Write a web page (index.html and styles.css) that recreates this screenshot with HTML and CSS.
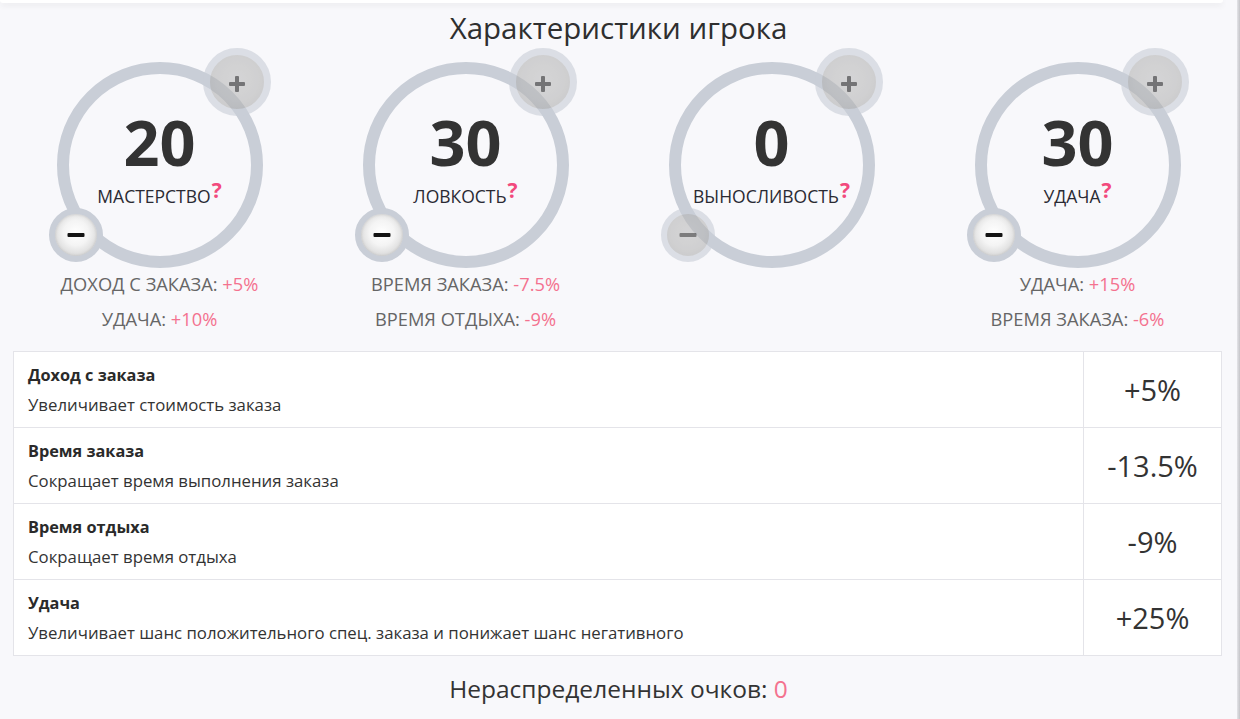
FILE: index.html
```html
<!DOCTYPE html>
<html lang="ru">
<head>
<meta charset="utf-8">
<title>Характеристики игрока</title>
<link rel="stylesheet" href="styles.css">
</head>
<body>
<div class="app">
  <main class="main">
    <div class="topbar"></div>
    <h1 class="title">Характеристики игрока</h1>

    <section class="stats">
      <div class="stat">
        <div class="dial">
          <div class="dial-value">20</div>
          <div class="dial-label">МАСТЕРСТВО<span class="hint">?</span></div>
          <button class="btn btn-plus is-disabled"><span class="sign-h"></span><span class="sign-v"></span></button>
          <button class="btn btn-minus"><span class="sign-h"></span></button>
        </div>
        <ul class="effects">
          <li>ДОХОД С ЗАКАЗА: <span class="pct">+5%</span></li>
          <li>УДАЧА: <span class="pct">+10%</span></li>
        </ul>
      </div>

      <div class="stat">
        <div class="dial">
          <div class="dial-value">30</div>
          <div class="dial-label">ЛОВКОСТЬ<span class="hint">?</span></div>
          <button class="btn btn-plus is-disabled"><span class="sign-h"></span><span class="sign-v"></span></button>
          <button class="btn btn-minus"><span class="sign-h"></span></button>
        </div>
        <ul class="effects">
          <li>ВРЕМЯ ЗАКАЗА: <span class="pct">-7.5%</span></li>
          <li>ВРЕМЯ ОТДЫХА: <span class="pct">-9%</span></li>
        </ul>
      </div>

      <div class="stat">
        <div class="dial">
          <div class="dial-value">0</div>
          <div class="dial-label">ВЫНОСЛИВОСТЬ<span class="hint">?</span></div>
          <button class="btn btn-plus is-disabled"><span class="sign-h"></span><span class="sign-v"></span></button>
          <button class="btn btn-minus is-disabled"><span class="sign-h"></span></button>
        </div>
      </div>

      <div class="stat">
        <div class="dial">
          <div class="dial-value">30</div>
          <div class="dial-label">УДАЧА<span class="hint">?</span></div>
          <button class="btn btn-plus is-disabled"><span class="sign-h"></span><span class="sign-v"></span></button>
          <button class="btn btn-minus"><span class="sign-h"></span></button>
        </div>
        <ul class="effects">
          <li>УДАЧА: <span class="pct">+15%</span></li>
          <li>ВРЕМЯ ЗАКАЗА: <span class="pct">-6%</span></li>
        </ul>
      </div>
    </section>

    <table class="summary">
      <tr>
        <td class="summary-info">
          <div class="summary-name">Доход с заказа</div>
          <div class="summary-desc">Увеличивает стоимость заказа</div>
        </td>
        <td class="summary-value">+5%</td>
      </tr>
      <tr>
        <td class="summary-info">
          <div class="summary-name">Время заказа</div>
          <div class="summary-desc">Сокращает время выполнения заказа</div>
        </td>
        <td class="summary-value">-13.5%</td>
      </tr>
      <tr>
        <td class="summary-info">
          <div class="summary-name">Время отдыха</div>
          <div class="summary-desc">Сокращает время отдыха</div>
        </td>
        <td class="summary-value">-9%</td>
      </tr>
      <tr>
        <td class="summary-info">
          <div class="summary-name">Удача</div>
          <div class="summary-desc">Увеличивает шанс положительного спец. заказа и понижает шанс негативного</div>
        </td>
        <td class="summary-value">+25%</td>
      </tr>
    </table>

    <p class="points">Нераспределенных очков: <span class="pct">0</span></p>
  </main>
  <div class="edge"></div>
</div>
</body>
</html>
```

FILE: styles.css
```css
* {
  box-sizing: border-box;
}

html,
body {
  margin: 0;
  padding: 0;
}

body {
  background: #f8f8fb;
  color: #333;
  font-family: "Open Sans", "Noto Sans", sans-serif;
  overflow: hidden;
}

.app {
  display: flex;
  height: 719px;
}

.main {
  flex: 1;
  min-width: 0;
}

.edge {
  width: 3px;
  background: linear-gradient(90deg, #e4e4e8, #c4c4c8);
}

.topbar {
  height: 3px;
  margin-right: 14px;
  background: #fff;
  border-radius: 0 0 6px 6px;
  box-shadow: 0 2px 6px rgba(0, 0, 0, 0.09);
}

.title {
  margin: 7px 0 0;
  font-size: 29.5px;
  line-height: 36px;
  font-weight: 400;
  text-align: center;
  color: #2f2f2f;
}

/* four stat dials */
.stats {
  display: grid;
  grid-template-columns: repeat(4, 1fr);
  align-items: start;
  padding: 0 6.5px;
  margin-top: 16px;
}

.stat {
  display: flex;
  flex-direction: column;
  align-items: center;
}

.dial {
  position: relative;
  width: 206px;
  height: 206px;
  border: 12px solid #c9ced7;
  border-radius: 50%;
  display: flex;
  flex-direction: column;
  align-items: center;
  padding-top: 40px;
}

.dial-value {
  font-size: 63px;
  line-height: 56px;
  font-weight: 700;
  color: #333;
}

.dial-label {
  margin-top: 12px;
  font-size: 17.5px;
  line-height: 24px;
  color: #2a2a33;
  white-space: nowrap;
}

.hint {
  display: inline-block;
  margin-left: 1px;
  font-size: 21px;
  font-weight: 700;
  color: #f24a7d;
  vertical-align: 5px;
  line-height: 16px;
}

/* plus / minus controls sit on the ring */
.btn {
  position: absolute;
  padding: 0;
  border-style: solid;
  border-color: #c9ced7;
  border-radius: 50%;
  box-sizing: content-box;
  cursor: pointer;
}

.btn-plus {
  left: 134px;
  top: -26px;
  width: 54px;
  height: 54px;
  border-width: 7px;
}

.btn-minus {
  left: -20px;
  top: 134px;
  width: 42px;
  height: 42px;
  border-width: 6px;
  background: radial-gradient(circle at 50% 45%, #ffffff 0%, #f4f4f4 40%, #c6c6c6 100%);
  box-shadow: inset 0 0 3px rgba(0, 0, 0, 0.15);
}

.btn.is-disabled {
  opacity: 0.6;
  background: radial-gradient(circle at 50% 45%, #bebebe 0%, #b6b6b6 55%, #a6a6a6 100%);
  box-shadow: none;
}

.sign-h,
.sign-v {
  position: absolute;
  left: 50%;
  top: 50%;
  background: #1e1e1e;
  border-radius: 1px;
}

.btn-plus .sign-h {
  width: 16px;
  height: 4px;
  transform: translate(-50%, -50%);
  margin-top: 2px;
}

.btn-plus .sign-v {
  width: 4px;
  height: 16px;
  transform: translate(-50%, -50%);
  margin-top: 2px;
}

.btn-minus .sign-h {
  width: 17px;
  height: 4px;
  transform: translate(-50%, -50%);
  background: #141414;
}

.btn-minus.is-disabled .sign-h {
  background: #2a2a2a;
}

.effects {
  list-style: none;
  margin: -2px 0 0;
  padding: 0;
  text-align: center;
  font-size: 18.3px;
  line-height: 35px;
  color: #666;
  white-space: nowrap;
}

.pct {
  color: #f4728f;
}

/* summary table */
.summary {
  width: calc(100% - 28px);
  margin: 15px 0 0 13px;
  border-collapse: collapse;
  background: #fff;
}

.summary td {
  height: 76px;
  border: 1px solid #e4e4e9;
  padding: 0 14px;
}

.summary-info {
  vertical-align: top;
  padding-top: 8px !important;
}

.summary-name {
  font-size: 16.3px;
  font-weight: 700;
  line-height: 30px;
  color: #2a2a2a;
}

.summary-desc {
  font-size: 16.8px;
  line-height: 30px;
  color: #333;
}

.summary-value {
  width: 138px;
  text-align: center;
  font-size: 29px;
  color: #333;
}

.points {
  margin: 0;
  text-align: center;
  font-size: 24.5px;
  line-height: 66px;
  color: #333;
}
```
